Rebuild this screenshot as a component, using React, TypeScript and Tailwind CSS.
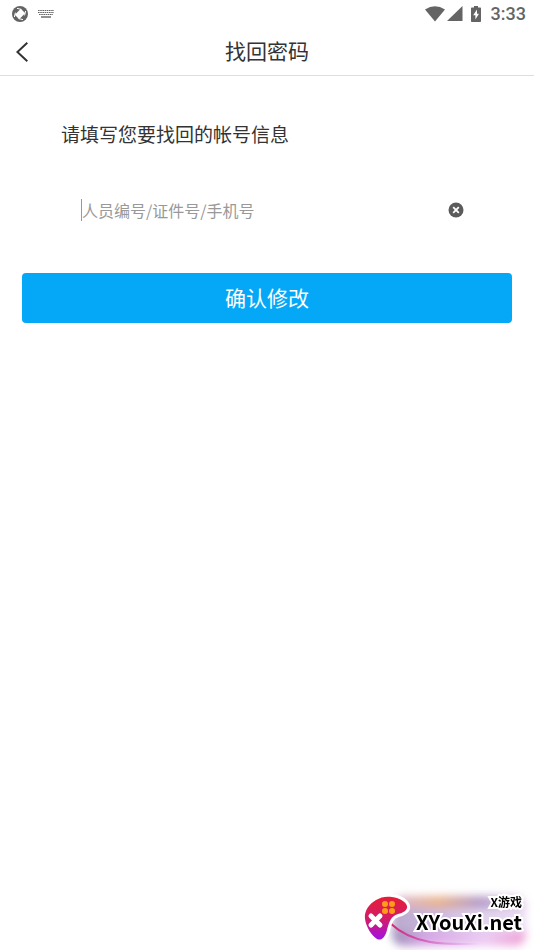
import React, { useState } from "react";

function StatusBar() {
  return (
    <div className="flex h-7 items-center justify-between pl-3 pr-2 text-[#646464]">
      <div className="flex items-center gap-2">
        <svg className="size-4" viewBox="0 0 16 16">
          <circle cx="8" cy="8" r="8" fill="currentColor" />
          <path d="M8.8 2.8 13.2 7.2 7.2 13.2 2.8 8.8Z" fill="#fff" />
          <path
            d="M9.4 3.4 5 2.4M12.6 9.4 13.6 5M6.6 12.6l4.4 1M3.4 6.6 2.4 11"
            stroke="#fff"
            strokeWidth="1"
          />
        </svg>
        <svg className="h-4 w-5" viewBox="0 0 20 16" stroke="currentColor" fill="none">
          <path d="M2 4.5h16M2 6.5h16M3 8.5h14" strokeWidth="1.2" strokeDasharray="1.6 .6" />
          <path d="M5 11h10" strokeWidth="1.4" />
        </svg>
      </div>
      <div className="flex items-center">
        <svg className="h-4 w-5" viewBox="0 0 20 16" fill="currentColor">
          <path d="M0 3.5Q10-3 20 3.5L10 15.5Z" />
        </svg>
        <svg className="ml-0.5 size-4" viewBox="0 0 16 16" fill="currentColor">
          <path d="M15.5 0v15H0Z" />
        </svg>
        <svg className="ml-2 h-4 w-3" viewBox="0 0 12 16" fill="currentColor">
          <path d="M3 0h4v1.5h2.2q.8 0 .8.8v12.9q0 .8-.8.8H.8q-.8 0-.8-.8V2.3q0-.8.8-.8H3Z" />
          <path d="M6 3.5 2.2 9.3h2.2v4.2L8 7.7H6Z" fill="#fff" />
        </svg>
        <span className="ml-2 font-[Roboto] text-lg font-medium leading-7">3:33</span>
      </div>
    </div>
  );
}

function Header() {
  return (
    <header className="grid h-12 grid-cols-[48px_1fr_48px] items-center border-b border-[#dedede]">
      <button type="button" aria-label="返回" className="flex h-full items-center pl-4">
        <svg className="h-5 w-3" viewBox="0 0 12 20" fill="none" stroke="#333" strokeWidth="2">
          <path d="M11.3.8 1.4 10l9.9 9.2" />
        </svg>
      </button>
      <h1 className="pb-1 text-center text-[21px] leading-8">找回密码</h1>
    </header>
  );
}

function Watermark() {
  return (
    <div className="pointer-events-none fixed bottom-0 right-0 h-[62px] w-[174px]">
      <div className="absolute bottom-1 left-8 right-2 top-2 overflow-hidden rounded-xl bg-[linear-gradient(90deg,#b9a8cc,#cdb8e0_35%,#dcd0ea_60%,#ecdcf4)] blur-[4px]">
        <div className="h-3 bg-[linear-gradient(90deg,#d8b8d8,#eab48e_35%,#b49ac8_65%,#e0cce8)]" />
        <div className="mt-6 h-4 bg-[linear-gradient(90deg,#9a8fb8,#d7a5e6_25%,#eecbf4_70%,#ef9fd4)]" />
      </div>
      <svg className="absolute inset-0 size-full" viewBox="0 0 174 62" fill="none">
        <defs>
          <linearGradient id="pad" x1="0" y1="0" x2="0" y2="1">
            <stop offset="0" stopColor="#e41f37" />
            <stop offset=".5" stopColor="#d51b66" />
            <stop offset="1" stopColor="#a112e5" />
          </linearGradient>
          <linearGradient id="cord" x1="0" y1="0" x2="1" y2="0">
            <stop offset="0" stopColor="#d91f6e" />
            <stop offset=".7" stopColor="#c85be8" stopOpacity="0" />
          </linearGradient>
        </defs>
        <path d="M30 35Q46 50 70 54t88 0" stroke="url(#cord)" strokeWidth="2" />
        <path
          d="M16 12C21 9 26 8 32 9C40 10 46 14 47 18C48 22 43 25 38 26C31 28 29 34 27 42C25 50 21 53 17 51C12 48 6 39 5 31C4 23 9 16 16 12Z"
          fill="url(#pad)"
          stroke="#fff"
          strokeWidth="6"
          strokeLinejoin="round"
          paintOrder="stroke"
        />
        <g fill="#ff9d18">
          <circle cx="25" cy="16" r="3" />
          <circle cx="32" cy="16" r="3" />
          <circle cx="25" cy="23" r="3" />
          <circle cx="32" cy="23" r="3" />
        </g>
        <path d="m11 28 9 9M20 28l-9 9" stroke="#fff" strokeWidth="5" strokeLinecap="round" />
      </svg>
      <div className="relative flex flex-col items-end pr-3 pt-1 font-bold text-black [paint-order:stroke] [-webkit-text-stroke:4px_white]">
        <span className="text-xs leading-5">X游戏</span>
        <span className="text-xl leading-5">XYouXi.net</span>
      </div>
    </div>
  );
}

export default function App() {
  const [account, setAccount] = useState("");

  return (
    <div className="min-h-screen bg-white font-['Noto_Sans_CJK_SC',sans-serif] text-[#333]">
      <StatusBar />
      <Header />

      <main>
        <form className="px-[22px] pt-10" onSubmit={(e) => e.preventDefault()}>
          <label htmlFor="account" className="block pl-[39px] text-[19px] leading-9">
            请填写您要找回的帐号信息
          </label>
          <div className="mt-9 flex h-11 items-center pl-[59px] pr-12">
            <span className="h-[22px] w-px bg-[#999]" />
            <input
              id="account"
              type="text"
              value={account}
              onChange={(e) => setAccount(e.target.value)}
              placeholder="人员编号/证件号/手机号"
              className="h-8 min-w-0 flex-1 text-base outline-none placeholder:text-[#999]"
            />
            <button type="button" aria-label="清除" onClick={() => setAccount("")}>
              <svg className="size-4" viewBox="0 0 16 16">
                <circle cx="8" cy="8" r="7.5" fill="#5b5b5b" />
                <path d="m5.2 5.2 5.6 5.6m0-5.6-5.6 5.6" stroke="#fff" strokeWidth="1.8" />
              </svg>
            </button>
          </div>
          <button
            type="submit"
            className="mt-[41px] h-[50px] w-full rounded bg-[#05a8f7] pb-0.5 text-[21px] leading-8 text-white"
          >
            确认修改
          </button>
        </form>
      </main>

      <Watermark />
    </div>
  );
}
